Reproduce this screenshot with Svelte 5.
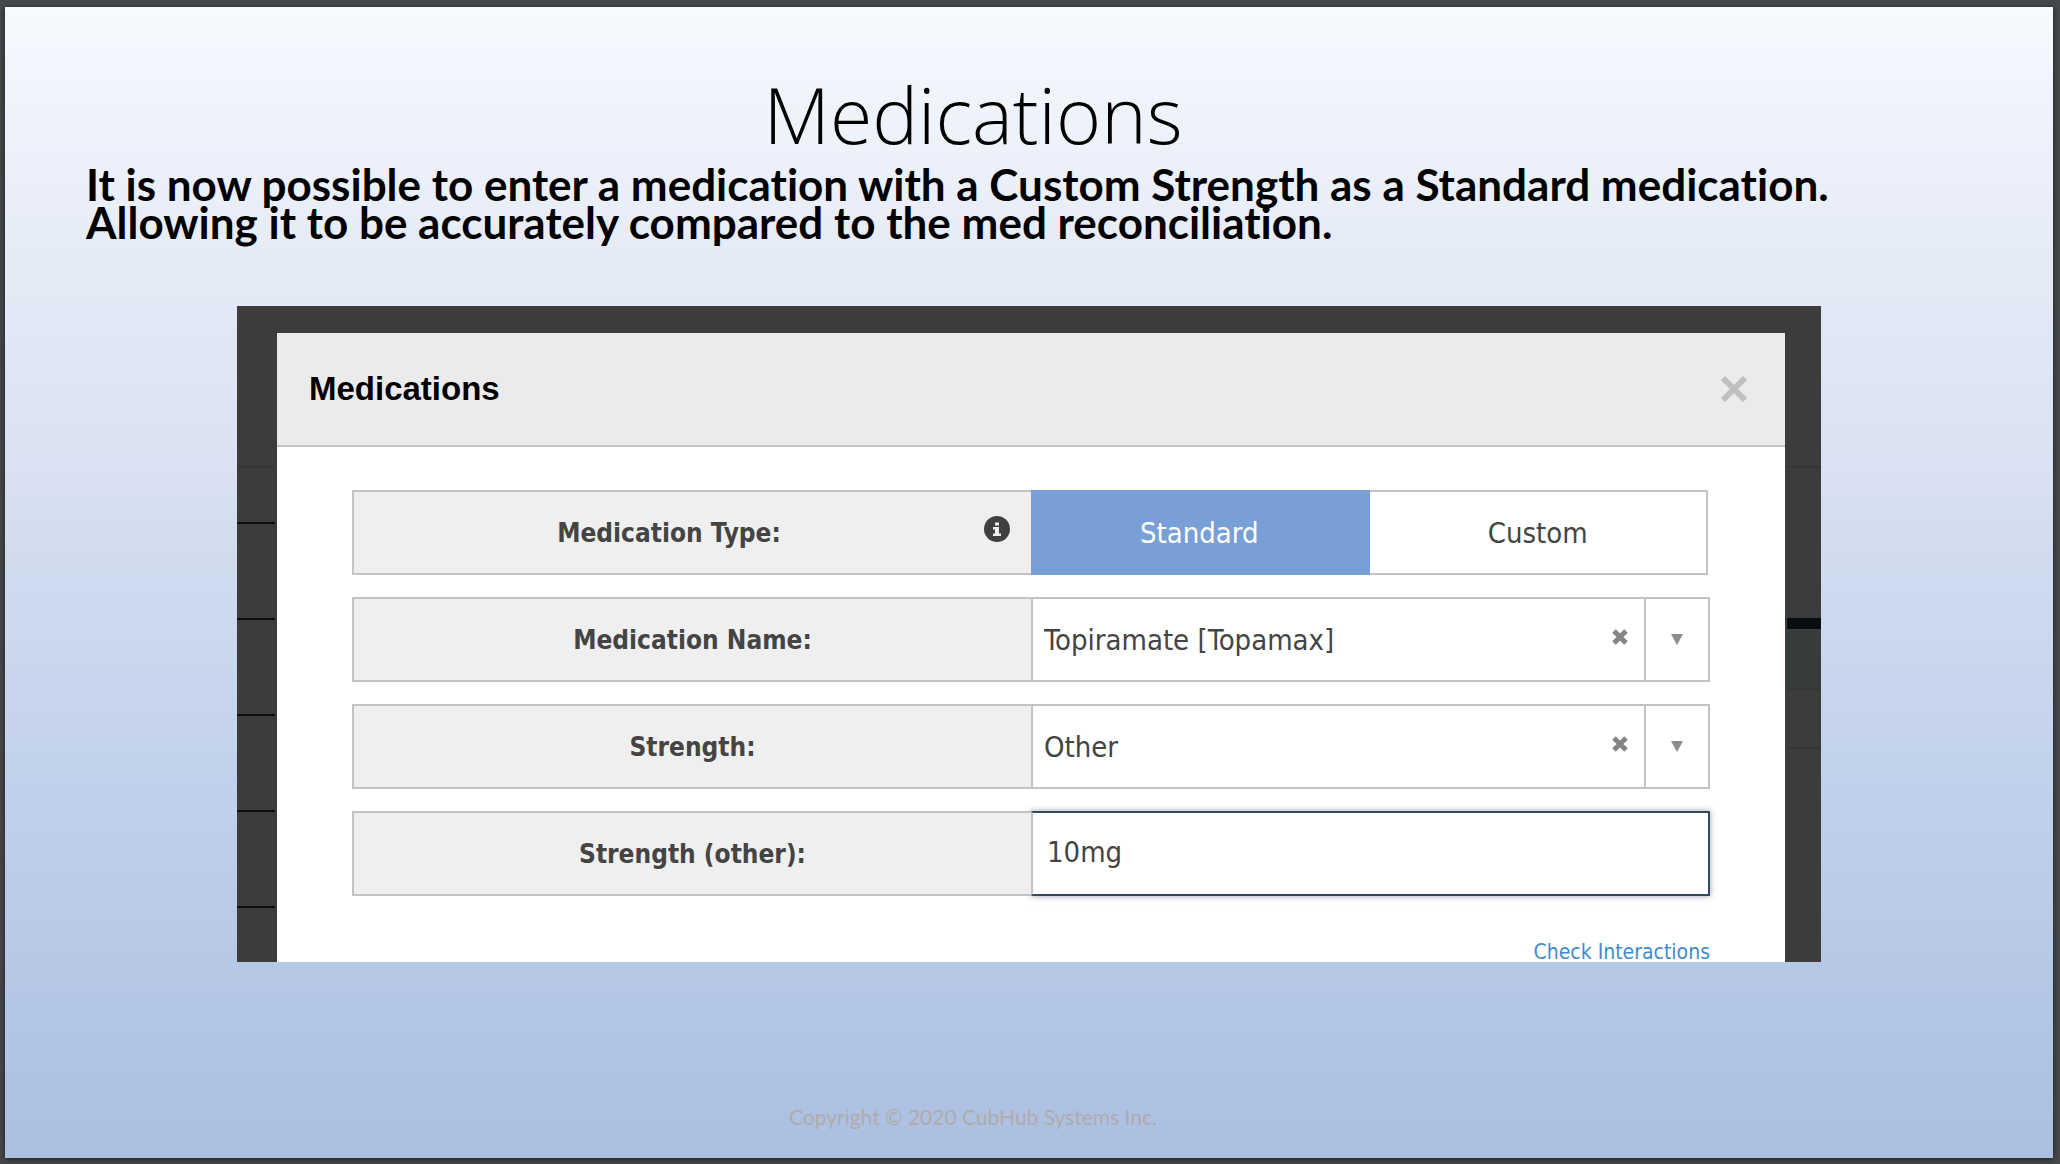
<script lang="ts">
    type SelectField = { id: string, label: string, value: string, options: string[] }

    let medType = 'Standard'
    const types = ['Standard', 'Custom']

    let selects: SelectField[] = [
        { id: 'med-name', label: 'Medication Name:', value: 'Topiramate [Topamax]', options: ['Topiramate [Topamax]'] },
        { id: 'strength', label: 'Strength:', value: 'Other', options: ['Other'] },
    ]
    let strengthOther = '10mg'

    function clear(i: number){
        selects[i].value = ''
    }
</script>

<div class="viewer">
    <main class="slide">
        <h1>Medications</h1>
        <p class="lead">It is now possible to enter a medication with a Custom Strength as a Standard medication.<br>Allowing it to be accurately compared to the med reconciliation.</p>

        <div class="shot">
            <div class="strip left"></div>
            <section class="modal" aria-labelledby="modal-title">
                <header>
                    <h2 id="modal-title">Medications</h2>
                    <button class="close" aria-label="Close">
                        <svg viewBox="0 0 28 28"><path d="M3 3L25 25M25 3L3 25" /></svg>
                    </button>
                </header>
                <form on:submit|preventDefault>
                    <div class="row">
                        <div class="label">
                            <span id="type-label">Medication Type:</span>
                            <button type="button" class="info" aria-label="About medication type">
                                <svg viewBox="0 0 26 26">
                                    <circle cx="13" cy="13" r="13" />
                                    <path d="M11 6.500h4v3h-4zM9 11h6v6.500h2v2.500H9v-2.500h2v-4H9z" />
                                </svg>
                            </button>
                        </div>
                        <div class="types" role="group" aria-labelledby="type-label">
                            {#each types as t}
                                <button type="button" class:active={medType === t} aria-pressed={medType === t} on:click={() => medType = t}>{t}</button>
                            {/each}
                        </div>
                    </div>
                    {#each selects as s, i}
                        <div class="row">
                            <label class="label" for={s.id}>{s.label}</label>
                            <div class="field">
                                <select id={s.id} bind:value={s.value}>
                                    {#each s.options as o}
                                        <option>{o}</option>
                                    {/each}
                                </select>
                                <button type="button" class="clear" aria-label="Clear" on:click={() => clear(i)}>
                                    <svg viewBox="0 0 16 16"><path d="M2 2L14 14M14 2L2 14" /></svg>
                                </button>
                                <button type="button" class="arrow" aria-label="Open list">
                                    <svg viewBox="0 0 14 12"><path d="M1 0H13L7 11Z" /></svg>
                                </button>
                            </div>
                        </div>
                    {/each}
                    <div class="row">
                        <label class="label" for="strength-other">Strength (other):</label>
                        <input id="strength-other" type="text" bind:value={strengthOther}>
                    </div>
                    <a href="#interactions">Check Interactions</a>
                </form>
            </section>
            <div class="strip right"></div>
        </div>

        <footer>Copyright © 2020 CubHub Systems Inc.</footer>
    </main>
</div>

<style>
:global(body){
    background: #46494b;
}

*{
    box-sizing: border-box;
}

.viewer{
    display: flex;
    min-height: 100vh;
    padding: 7px 7px 6px 5px;
    background: #46494b;
}

.slide{
    display: flex;
    flex-direction: column;
    flex-grow: 1;
    min-width: 0;
    font-family: Lato, sans-serif;
    font-variant-ligatures: none;
    color: #000;
    background: linear-gradient(#f8fafd, #f1f5fd 6%, #e3e9f5 25%, #dae1f2 40%, #d0dcee 48%, #c7d5ed 60%, #b8c9e7 82%, #abbfe1);
    box-shadow: 0 1px 6px #1c1f21;
}

h1{
    margin: 0;
    padding: 62px 112px 4px 0;
    font-family: "Open Sans", sans-serif;
    font-size: 77px;
    font-weight: 300;
    line-height: 92px;
    text-align: center;
}

.lead{
    margin: 0;
    padding: 0 0 0 81px;
    font-size: 44px;
    font-weight: 700;
    line-height: 38px;
}

.shot{
    display: grid;
    grid-template-columns: 38px 1fr 34px;
    column-gap: 2px;
    margin: 65px 232px 0;
    padding-top: 27px;
    background: #3c3c3c;
}

.strip.left{
    background:
        linear-gradient(#363636, #363636) 0 133px / 100% 2px no-repeat,
        linear-gradient(#3c3c3c, #3c3c3c) 0 0 / 100% 180px no-repeat,
        repeating-linear-gradient(#3c3c3c 0 93px, #0b1015 93px 95px, #3c3c3c 95px 96px);
}

.strip.right{
    background: linear-gradient(
        #3c3c3c 133px, #363636 133px 135px,
        #3c3c3c 135px 285px, #070d11 285px 296px,
        #373d3d 296px 355px, #363636 355px 357px,
        #3c3c3c 357px 414px, #363636 414px 416px,
        #3c3c3c 416px);
}

.modal{
    background: #fff;
    font-family: "DejaVu Sans Condensed", "DejaVu Sans", sans-serif;
    color: #444;
}

header{
    display: flex;
    align-items: center;
    justify-content: space-between;
    height: 114px;
    padding: 0 37px 0 32px;
    background: #ebebeb;
    border-bottom: 2px solid #c3c3c3;
}

h2{
    margin: 0;
    font-family: "Liberation Sans", Arial, sans-serif;
    font-size: 33px;
    font-weight: 700;
    color: #000;
}

button, select, input{
    margin: 0;
    padding: 0;
    border: 0;
    border-radius: 0;
    outline: 0;
    appearance: none;
    background: none;
    font: inherit;
    color: inherit;
}

svg{
    display: block;
}

.close svg{
    width: 28px;
    height: 28px;
    fill: none;
    stroke: #bfbfbf;
    stroke-width: 6;
}

form{
    display: flex;
    flex-direction: column;
    gap: 22px;
    padding: 43px 75px 0;
}

.row{
    display: grid;
    grid-template-columns: 1fr 1fr;
    height: 85px;
    font-size: 29px;
}

.label{
    position: relative;
    z-index: 1;
    display: flex;
    align-items: center;
    justify-content: center;
    background: #efefef;
    border: 2px solid #c3c3c3;
    border-right: 0;
    font-size: 26px;
    font-weight: 700;
}

.label span{
    flex-grow: 1;
    text-align: center;
}

.info{
    margin: 0 21px 8px 0;
}

.info svg{
    width: 26px;
    height: 26px;
    fill: #404040;
}

.info path{
    fill: #efefef;
}

.types{
    display: flex;
    margin-right: 2px;
}

.types button{
    flex: 1;
    border: 2px solid #c3c3c3;
    border-left: 0;
}

.types .active{
    color: #fff;
    background: #799fd7;
    border-color: #799fd7;
}

.field{
    display: flex;
    align-items: stretch;
    min-width: 0;
    border: 2px solid #c3c3c3;
}

select{
    flex-grow: 1;
    min-width: 0;
    padding-left: 11px;
}

.clear{
    padding: 0 16px 6px;
}

.clear svg{
    width: 16px;
    height: 16px;
    fill: none;
    stroke: #858585;
    stroke-width: 5;
}

.arrow{
    width: 64px;
    border-left: 2px solid #c3c3c3;
}

.arrow svg{
    width: 14px;
    height: 12px;
    margin: 0 auto;
    fill: #8c8c8c;
}

input{
    min-width: 0;
    padding: 0 14px 4px;
    border: 2px solid #34495e;
    border-left-color: #c3c3c3;
    box-shadow: 0 0 6px #34495e80;
}

a{
    align-self: flex-end;
    margin-top: 24px;
    font-size: 21px;
    line-height: 20px;
    color: #428bca;
    text-decoration: none;
}

footer{
    margin-top: auto;
    padding: 0 112px 28px 0;
    font-size: 21px;
    line-height: 26px;
    text-align: center;
    color: #b0abab;
}
</style>
